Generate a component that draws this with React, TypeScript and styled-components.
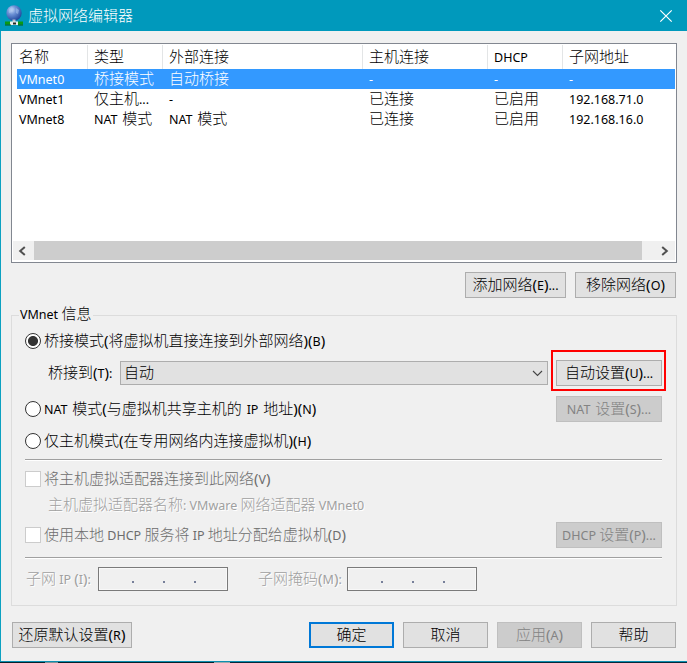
import React from "react";
import styled, { createGlobalStyle, css } from "styled-components";

const GlobalStyle = createGlobalStyle`
  * { box-sizing: border-box; }
  body { margin: 0; background: #f0f0f0; overflow: hidden; }
`;

/* ---------- mixed-script text ---------- */

type Tone = "normal" | "inverse" | "dim" | "etched" | "disabled" | "title";

const toneColors: Record<Tone, string> = {
  normal: "#000",
  inverse: "#fff",
  dim: "#6d6d6d",
  etched: "#a0a0a0",
  disabled: "#838383",
  title: "#fff",
};

const Line = styled.span<{ $tone: Tone; $gap: number }>`
  display: block;
  height: 20px;
  font: 15px/18px "Noto Sans", "Noto Sans CJK SC", sans-serif;
  word-spacing: ${(p) => p.$gap}px;
  white-space: pre;
  color: ${(p) => toneColors[p.$tone]};
  ${(p) => p.$tone === "etched" && css`text-shadow: 1px 1px 0 #fff;`}
`;

const Han = styled.span`
  font-family: "Noto Sans CJK SC", sans-serif;
  font-size: 15px;
  font-weight: 300;
  line-height: 0;
`;

const Latin = styled.span`
  font-family: "Noto Sans", sans-serif;
  font-size: 12.5px;
  line-height: 0;
`;

const Paren = styled.span`
  font-family: "Noto Sans", sans-serif;
  font-size: 15px;
  line-height: 0;
`;

function Text({ children, tone = "normal" }: { children: string; tone?: Tone }) {
  const runs = children.match(/[\u4e00-\u9fff]+|[()]+|[^\u4e00-\u9fff()]+/g) ?? [];
  return (
    <Line $tone={tone} $gap={children.startsWith("NAT") ? 1.5 : 0}>
      {runs.map((run, i) => {
        if (/[\u4e00-\u9fff]/.test(run)) return <Han key={i}>{run}</Han>;
        if (/[()]/.test(run)) return <Paren key={i}>{run}</Paren>;
        return <Latin key={i}>{run}</Latin>;
      })}
    </Line>
  );
}

/* ---------- window ---------- */

const Window = styled.div`
  width: 687px;
  height: 663px;
  display: flex;
  flex-direction: column;
  background: #f0f0f0;
  border-left: 1px solid #0ca1c1;
`;

const TitleBar = styled.header`
  height: 31px;
  margin-left: -1px;
  flex: none;
  display: flex;
  align-items: center;
  background: #0099bc;
  padding: 0 14px 0 5px;
`;

const TitleText = styled.h1`
  flex: 1;
  margin: 1px 0 0 4px;
  font-size: 15px;
  font-weight: 400;
  height: 20px;
`;

const Content = styled.main`
  flex: none;
  height: 630px;
  padding: 12px 10px 0;
`;

const BottomEdge = styled.div`
  height: 2px;
  margin-left: -1px;
  border-top: 1px solid #0c8fb0;
  background: linear-gradient(90deg, #06212b 0 45px, #7d9296 45px 58px, #06212b 58px 214px, #9aa9ab 214px 230px, #04293a 230px);
`;

/* ---------- network list ---------- */

const ListBox = styled.section`
  width: 666px;
  height: 220px;
  background: #fff;
  border: 1px solid #828790;
  display: flex;
  flex-direction: column;
`;

const HeaderRow = styled.div`
  display: grid;
  grid-template-columns: 76px 75px 200px 125px 75px 1fr;
  height: 25px;
`;

const HeaderCell = styled.div`
  border-right: 1px solid #e3e5e6;
  margin-top: 1px;
  padding: 2px 0 0 6px;
  &:first-child { padding-left: 7px; }
  &:last-child { border: 0; }
`;

const Row = styled.div<{ $selected?: boolean }>`
  display: grid;
  grid-template-columns: 70px 75px 200px 125px 75px 1fr;
  height: 20px;
  margin: 0 1px 0 5px;
  background: ${(p) => (p.$selected ? "#3399ff" : "transparent")};
`;

const Cell = styled.div`
  padding-left: 7px;
  height: 20px;
  &:first-child { padding-left: 2px; }
`;

const ScrollBar = styled.div`
  height: 19px;
  margin: auto 1px 2px;
  display: flex;
  background: #f0f0f0;
`;

const ScrollArrow = styled.div<{ $end?: boolean }>`
  width: ${(p) => (p.$end ? 33 : 21)}px;
  display: flex;
  align-items: center;
  justify-content: ${(p) => (p.$end ? "flex-end" : "flex-start")};
  padding: 0 ${(p) => (p.$end ? 6 : 5)}px;
`;

const Thumb = styled.div`
  flex: 1;
  background: #cdcdcd;
`;

/* ---------- controls ---------- */

const Button = styled.button<{ $w: number; $primary?: boolean }>`
  width: ${(p) => p.$w}px;
  height: 26px;
  flex: none;
  padding: 0;
  display: flex;
  align-items: center;
  justify-content: center;
  border: ${(p) => (p.$primary ? "2px solid #0078d7" : "1px solid #adadad")};
  background: #e1e1e1;
  &:disabled { background: #ccc; border-color: #bfbfbf; }
`;

const ListActions = styled.div`
  display: flex;
  justify-content: flex-end;
  gap: 9px;
  margin-top: 9px;
  width: 665px;
`;

const Group = styled.fieldset`
  width: 666px;
  height: 291px;
  margin: 17px 0 0;
  padding: 0 14px 0 13px;
  border: 1px solid #dcdcdc;
  min-width: 0;
`;

const Legend = styled.legend`
  float: left;
  height: 20px;
  margin: -12px 0 0 -6px;
  padding: 0 2px 0 1px;
  background: #f0f0f0;
`;

const GroupBody = styled.div`
  clear: both;
  padding-top: 8px;
`;

const Field = styled.div<{ $h: number; $indent?: number }>`
  display: flex;
  align-items: center;
  height: ${(p) => p.$h}px;
  padding-left: ${(p) => p.$indent ?? 0}px;
`;

const Spacer = styled.div`
  flex: 1;
`;

const RadioMark = styled.span<{ $on?: boolean }>`
  width: 16px;
  height: 16px;
  flex: none;
  margin-right: 3px;
  border-radius: 50%;
  border: 1px solid #333;
  background: ${(p) => (p.$on ? "radial-gradient(circle, #333 0 4.6px, #fff 5.4px)" : "#fff")};
`;

const CheckMark = styled.span`
  width: 16px;
  height: 16px;
  flex: none;
  margin-right: 3px;
  border: 1px solid #ccc;
  background: #fff;
`;

const Select = styled.div`
  width: 428px;
  height: 24px;
  flex: none;
  display: flex;
  align-items: center;
  justify-content: space-between;
  margin-top: 1px;
  padding: 0 4px 0 3px;
  border: 1px solid #adadad;
  background: #e1e1e1;
`;

const LabelBox = styled.div<{ $w: number }>`
  width: ${(p) => p.$w}px;
  flex: none;
  height: 20px;
`;

const Highlight = styled.div`
  width: 115px;
  height: 41px;
  flex: none;
  margin: 0 -4px 4px 3px;
  padding: 8px 0 0 3px;
  border: 2px solid #f00;
`;

const Divider = styled.div`
  width: 637px;
  height: 2px;
  background: #a0a0a0;
  border-bottom: 1px solid #fff;
`;

const IpBox = styled.div`
  width: 130px;
  height: 24px;
  flex: none;
  border: 1px solid #7a7a7a;
  display: flex;
  align-items: center;
  gap: 29px;
  padding: 6px 0 0 33px;
  box-shadow: inset 0 0 0 1px #f8f8f8;
`;

const IpDot = styled.i`
  width: 2px;
  height: 2px;
  background: #77809a;
`;

const Footer = styled.footer`
  display: flex;
  gap: 9px;
  width: 665px;
  margin-top: 16px;
  padding-left: 1px;
`;

/* ---------- icons ---------- */

const GlobeIcon = () => (
  <svg width="19" height="22" viewBox="0 0 19 22">
    <defs>
      <radialGradient id="globe" cx=".35" cy=".3" r=".75">
        <stop offset="0" stopColor="#c4d8f6" />
        <stop offset=".4" stopColor="#6b90d4" />
        <stop offset="1" stopColor="#1d449a" />
      </radialGradient>
    </defs>
    <circle cx="9" cy="8" r="7.7" fill="url(#globe)" />
    <path d="M4 4l3-2 2 2-2 3-3 1zM11 3l3 2-1 4-2-1z" fill="#a9c4ee" opacity=".55" />
    <path d="M7.5 14.5h3v3h-3z" fill="#b9c4cf" />
    <path d="M0 16.5h6v3H0zM13 16.5h5v3h-5z" fill="#0b9a12" />
    <path d="M5 16.5h8v3.5H5z" fill="#e8f0ed" />
    <path d="M8 17.5h3v2H8z" fill="#222b28" />
    <path d="M0 20h6M13 20h5" stroke="#07600b" />
  </svg>
);

const CloseIcon = () => (
  <svg width="14" height="14" viewBox="0 0 14 14">
    <path d="M1.3 1.3l11.4 11.4M12.7 1.3L1.3 12.7" stroke="#fff" strokeWidth="1.2" />
  </svg>
);

const Chevron = ({ flip }: { flip?: boolean }) => (
  <svg width="8" height="10" viewBox="0 0 8 10">
    <path d={flip ? "M1.2 1L5.8 5L1.2 9" : "M6.8 1L2.2 5L6.8 9"} fill="none" stroke="#505050" strokeWidth="2" />
  </svg>
);

const DownArrow = () => (
  <svg width="11" height="7" viewBox="0 0 11 7">
    <path d="M1 1l4.5 4.5L10 1" fill="none" stroke="#444" strokeWidth="1.1" />
  </svg>
);

const headers = ["名称", "类型", "外部连接", "主机连接", "DHCP", "子网地址"];
const networks = [
  ["VMnet0", "桥接模式", "自动桥接", "-", "-", "-"],
  ["VMnet1", "仅主机...", "-", "已连接", "已启用", "192.168.71.0"],
  ["VMnet8", "NAT 模式", "NAT 模式", "已连接", "已启用", "192.168.16.0"],
];

const IpField = () => (
  <IpBox>
    <IpDot />
    <IpDot />
    <IpDot />
  </IpBox>
);

export default function App() {
  return (
    <>
      <GlobalStyle />
      <Window>
        <TitleBar>
          <GlobeIcon />
          <TitleText>
            <Text tone="title">虚拟网络编辑器</Text>
          </TitleText>
          <CloseIcon />
        </TitleBar>
        <Content>
          <ListBox>
            <HeaderRow>
              {headers.map((h) => (
                <HeaderCell key={h}>
                  <Text>{h}</Text>
                </HeaderCell>
              ))}
            </HeaderRow>
            {networks.map((n, r) => (
              <Row key={n[0]} $selected={r === 0}>
                {n.map((v, i) => (
                  <Cell key={i}>
                    <Text tone={r === 0 ? "inverse" : "normal"}>{v}</Text>
                  </Cell>
                ))}
              </Row>
            ))}
            <ScrollBar>
              <ScrollArrow>
                <Chevron />
              </ScrollArrow>
              <Thumb />
              <ScrollArrow $end>
                <Chevron flip />
              </ScrollArrow>
            </ScrollBar>
          </ListBox>
          <ListActions>
            <Button $w={101}><Text>添加网络(E)...</Text></Button>
            <Button $w={101}><Text>移除网络(O)</Text></Button>
          </ListActions>
          <Group>
            <Legend><Text>VMnet 信息</Text></Legend>
            <GroupBody>
              <Field $h={18}>
                <RadioMark $on />
                <Text>桥接模式(将虚拟机直接连接到外部网络)(B)</Text>
              </Field>
              <Field $h={45} $indent={23}>
                <LabelBox $w={72}><Text>桥接到(T):</Text></LabelBox>
                <Select>
                  <Text>自动</Text>
                  <DownArrow />
                </Select>
                <Highlight>
                  <Button $w={106}><Text>自动设置(U)...</Text></Button>
                </Highlight>
              </Field>
              <Field $h={28}>
                <RadioMark />
                <Text>NAT 模式(与虚拟机共享主机的 IP 地址)(N)</Text>
                <Spacer />
                <Button $w={106} disabled><Text tone="disabled">NAT 设置(S)...</Text></Button>
              </Field>
              <Field $h={36}>
                <RadioMark />
                <Text>仅主机模式(在专用网络内连接虚拟机)(H)</Text>
              </Field>
              <Divider />
              <Field $h={36}>
                <CheckMark />
                <Text tone="dim">将主机虚拟适配器连接到此网络(V)</Text>
              </Field>
              <Field $h={16} $indent={23}>
                <Text tone="etched">主机虚拟适配器名称: VMware 网络适配器 VMnet0</Text>
              </Field>
              <Field $h={44}>
                <CheckMark />
                <Text tone="dim">使用本地 DHCP 服务将 IP 地址分配给虚拟机(D)</Text>
                <Spacer />
                <Button $w={106} disabled><Text tone="disabled">DHCP 设置(P)...</Text></Button>
              </Field>
              <Divider />
              <Field $h={40} $indent={1}>
                <LabelBox $w={72}><Text tone="etched">子网 IP (I):</Text></LabelBox>
                <IpField />
                <Field $h={20} $indent={30}>
                  <LabelBox $w={89}><Text tone="etched">子网掩码(M):</Text></LabelBox>
                </Field>
                <IpField />
              </Field>
            </GroupBody>
          </Group>
          <Footer>
            <Button $w={120}><Text>还原默认设置(R)</Text></Button>
            <Spacer />
            <Button $w={85} $primary><Text>确定</Text></Button>
            <Button $w={85}><Text>取消</Text></Button>
            <Button $w={85} disabled><Text tone="disabled">应用(A)</Text></Button>
            <Button $w={85}><Text>帮助</Text></Button>
          </Footer>
        </Content>
        <BottomEdge />
      </Window>
    </>
  );
}
